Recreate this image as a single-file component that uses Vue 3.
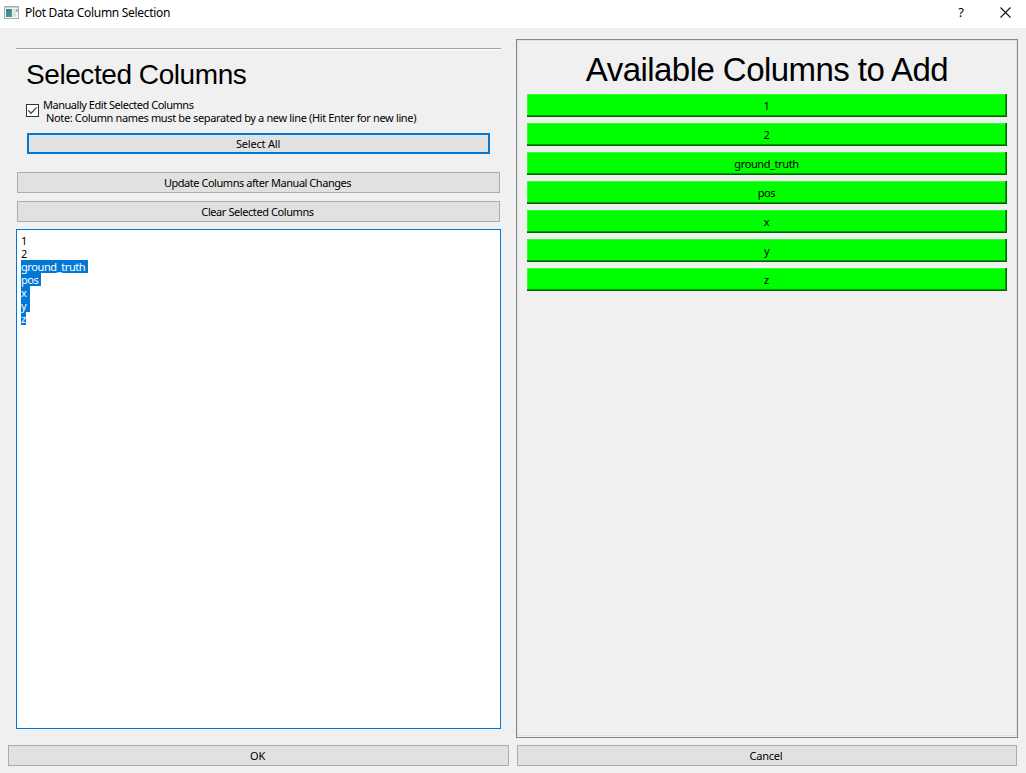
<script setup>
import { ref } from 'vue'

const available = ['1', '2', 'ground_truth', 'pos', 'x', 'y', 'z']
const lines = [
  { text: '1' },
  { text: '2' },
  { text: 'ground_truth', width: 67 },
  { text: 'pos', width: 20 },
  { text: 'x', width: 9 },
  { text: 'y', width: 9 },
  { text: 'z', width: 5 },
]
const manual = ref(true)
</script>

<template>
  <div class="dialog">
    <header class="titlebar">
      <svg class="app-icon" width="16" height="14" viewBox="0 0 16 14">
        <defs>
          <linearGradient id="pane" x1="0" y1="0" x2="1" y2="1">
            <stop offset="0" stop-color="#3f78a8" />
            <stop offset="1" stop-color="#48a66c" />
          </linearGradient>
        </defs>
        <rect x="0.5" y="0.5" width="14" height="12" fill="#f4f5f7" stroke="#a5aeb6" />
        <path d="M1 1.5h13" stroke="#c5cdd5" />
        <rect x="2" y="3" width="6" height="8" fill="url(#pane)" />
        <rect x="9" y="3" width="3" height="8" fill="#dce1e5" />
        <rect x="12" y="3" width="2" height="3" fill="#8fc5b4" />
      </svg>
      <span class="caption">Plot Data Column Selection</span>
      <span class="help">?</span>
      <svg class="close" width="11" height="11" viewBox="0 0 11 11">
        <path d="M0.5 0.5l10 10M10.5 0.5l-10 10" stroke="#111" stroke-width="1.1" fill="none" />
      </svg>
    </header>

    <main class="columns">
      <section class="left">
        <div class="rule"></div>
        <h2 class="selected-title">Selected Columns</h2>
        <div class="check-row">
          <svg class="box" width="13" height="13" viewBox="0 0 13 13" @click="manual = !manual">
            <rect x="0.5" y="0.5" width="12" height="12" fill="#fff" stroke="#333" />
            <path v-if="manual" d="M2.3 6.4l2.7 2.8 5.7-5.8" fill="none" stroke="#444" stroke-width="1.3" />
          </svg>
          <div class="check-text">
            <div class="t-manual">Manually Edit Selected Columns</div>
            <div class="t-note">Note: Column names must be separated by a new line (Hit Enter for new line)</div>
          </div>
        </div>
        <button class="btn focus">Select All</button>
        <button class="btn update">Update Columns after Manual Changes</button>
        <button class="btn clear">Clear Selected Columns</button>
        <div class="editor">
          <div
            v-for="line in lines"
            :key="line.text"
            class="line"
            :class="{ marked: line.width }"
            :style="line.width ? { width: line.width + 'px' } : null"
          >{{ line.text }}</div>
        </div>
      </section>

      <section class="right">
        <h1 class="available-title">Available Columns to Add</h1>
        <button v-for="name in available" :key="name" class="add">{{ name }}</button>
      </section>
    </main>

    <footer class="footer">
      <button class="btn">OK</button>
      <button class="btn">Cancel</button>
    </footer>
  </div>
</template>

<style>
body {
  margin: 0;
  background: #f0f0f0;
}
</style>

<style scoped>
.dialog {
  width: 1026px;
  height: 773px;
  box-sizing: border-box;
  background: #f0f0f0;
  display: flex;
  flex-direction: column;
  font-family: "Noto Sans", "Open Sans", sans-serif;
  font-size: 11px;
  line-height: 13px;
  color: #000;
  overflow: hidden;
}
.titlebar {
  height: 28px;
  flex: none;
  box-sizing: border-box;
  background: #fff;
  display: flex;
  align-items: center;
  padding: 0 15px 3px 4px;
}
.app-icon {
  margin-right: 5px;
}
.caption {
  font-size: 12px;
  letter-spacing: -0.3px;
  white-space: nowrap;
}
.help {
  margin-left: auto;
  margin-right: 36px;
  font-size: 13px;
}
.close {
  margin-bottom: 1px;
}
.columns {
  display: flex;
  height: 710px;
  flex: none;
}
.left {
  width: 485px;
  margin-left: 16px;
  padding-top: 20px;
  display: flex;
  flex-direction: column;
}
.rule {
  height: 1px;
  flex: none;
  background: #a0a0a0;
  border-bottom: 1px solid #fff;
}
h1,
h2 {
  margin: 0;
  font-family: "Liberation Sans", Arial, sans-serif;
  font-weight: 400;
  white-space: nowrap;
}
.selected-title {
  margin: 9px 0 0 10px;
  font-size: 28px;
  line-height: 32px;
  letter-spacing: -0.43px;
}
.check-row {
  display: flex;
  margin: 7px 0 0 10px;
  height: 27px;
}
.box {
  margin-top: 6px;
  flex: none;
}
.check-text {
  margin-left: 4px;
  white-space: nowrap;
}
.t-manual {
  letter-spacing: -0.47px;
}
.t-note {
  padding-left: 3px;
  letter-spacing: -0.36px;
}
.btn {
  display: block;
  box-sizing: border-box;
  height: 21px;
  flex: none;
  padding: 0 2px 0 0;
  background: #e1e1e1;
  border: 1px solid #adadad;
  border-radius: 0;
  font: inherit;
  line-height: 19px;
  letter-spacing: -0.2px;
  color: #000;
  text-align: center;
}
.focus {
  margin: 8px 11px 0;
  padding-right: 1px;
  border: 2px solid #0078d7;
  line-height: 17px;
}
.update {
  margin: 18px 1px 0;
  letter-spacing: -0.46px;
}
.clear {
  margin: 8px 1px 7px;
  letter-spacing: -0.42px;
}
.editor {
  height: 500px;
  box-sizing: border-box;
  border: 1px solid #0078d7;
  background: #fff;
  padding: 4px;
  letter-spacing: -0.4px;
}
.line {
  height: 13px;
  white-space: nowrap;
}
.marked {
  background: #0078d7;
  color: #fff;
}
.right {
  box-sizing: border-box;
  width: 502px;
  height: 699px;
  margin: 11px 0 0 15px;
  border: 1px solid #828790;
  box-shadow: inset 0 -1px 0 #f0f0f0, inset 0 -2px 0 #dfdfdf, inset 0 0 0 1px #dfdfdf;
  padding: 10px 10px 0;
  display: flex;
  flex-direction: column;
}
.available-title {
  font-size: 33px;
  line-height: 40px;
  height: 44px;
  letter-spacing: -0.55px;
  text-align: center;
}
.add {
  box-sizing: border-box;
  height: 23px;
  flex: none;
  margin: 0 0 6px;
  padding: 0 1px 0 0;
  border: 0;
  background: #0f0;
  box-shadow: inset -1px -1px 0 #006400, inset -2px -2px 0 #00a000, inset 1px 1px 0 #30ff30;
  font: inherit;
  line-height: 23px;
  letter-spacing: -0.4px;
  color: #000;
  text-align: center;
}
.footer {
  display: flex;
  gap: 8px;
  padding: 7px 9px 0 8px;
}
.footer .btn {
  width: 501px;
}
.footer .btn + .btn {
  width: 500px;
}
</style>
